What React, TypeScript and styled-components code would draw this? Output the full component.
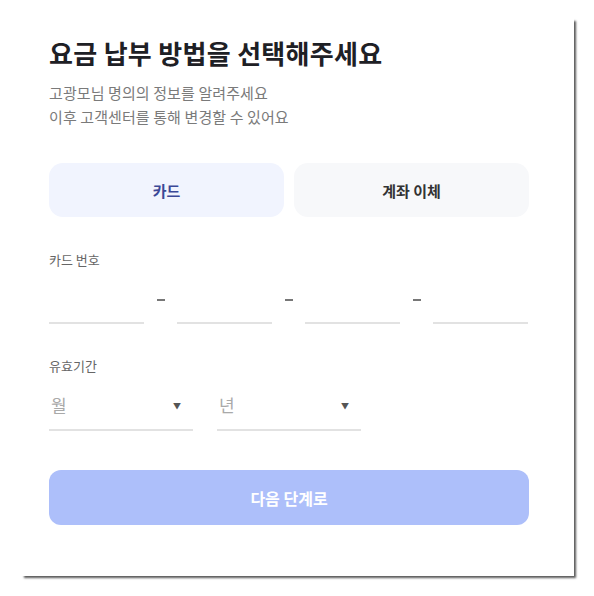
import React, { useState } from "react";
import styled, { createGlobalStyle } from "styled-components";

const GlobalStyle = createGlobalStyle`
  body {
    margin: 0;
    background: #ffffff;
    font-family: "Noto Sans CJK KR", "Noto Sans", sans-serif;
  }
`;

const Page = styled.div`
  height: 596px;
  padding: 17px 0 0 20px;
  box-sizing: border-box;
`;

const Card = styled.div`
  box-sizing: border-box;
  width: 554px;
  height: 559px;
  padding: 20px 0 0 29px;
  background: #ffffff;
  box-shadow: 3px 3px 2px -1px rgba(0, 0, 0, 0.65);
`;

const Content = styled.div`
  width: 480px;
  display: flex;
  flex-direction: column;
`;

const Title = styled.h1`
  margin: 0;
  font-size: 26px;
  line-height: 32px;
  font-weight: 700;
  color: #1e2025;
  letter-spacing: 0.3px;
`;

const Subtitle = styled.p`
  margin: 12px 0 0;
  font-size: 15px;
  line-height: 24px;
  color: #7a7a7a;
  letter-spacing: 0.1px;
`;

const Tabs = styled.div`
  margin-top: 34px;
  display: grid;
  grid-template-columns: 1fr 1fr;
  gap: 10px;
`;

const Tab = styled.button<{ $active?: boolean }>`
  height: 54px;
  border: 0;
  border-radius: 14px;
  font-family: inherit;
  font-size: 15px;
  font-weight: 700;
  background: ${(p) => (p.$active ? "#f1f4fe" : "#f7f8fa")};
  color: ${(p) => (p.$active ? "#3b4897" : "#333333")};
  cursor: pointer;
`;

const FieldLabel = styled.div<{ $top: number }>`
  margin-top: ${(p) => p.$top}px;
  font-size: 13px;
  line-height: 20px;
  color: #666666;
`;

const NumberRow = styled.div`
  margin-top: 13px;
  display: flex;
  align-items: flex-start;
`;

const NumberInput = styled.input`
  box-sizing: border-box;
  width: 95px;
  height: 41px;
  border: 0;
  border-bottom: 2px solid #e2e2e2;
  outline: none;
  font-family: inherit;
  font-size: 15px;
  background: transparent;
`;

const Dash = styled.span`
  width: 33px;
  height: 33px;
  display: flex;
  align-items: center;
  justify-content: center;

  &::before {
    content: "";
    width: 8px;
    height: 2px;
    background: #777777;
  }
`;

const SelectRow = styled.div`
  margin-top: 9px;
  display: flex;
  gap: 24px;
`;

const SelectBox = styled.div`
  box-sizing: border-box;
  width: 144px;
  padding: 8px 12px 12px 2px;
  display: flex;
  align-items: center;
  justify-content: space-between;
  border-bottom: 2px solid #e2e2e2;
`;

const Placeholder = styled.span`
  font-size: 17px;
  line-height: 24px;
  color: #a9a9a9;
`;

const Arrow = styled.span`
  font-size: 8px;
  color: #555555;
`;

const NextButton = styled.button`
  margin-top: 39px;
  height: 55px;
  border: 0;
  border-radius: 12px;
  background: #adbffa;
  color: #ffffff;
  font-family: inherit;
  font-size: 16px;
  font-weight: 700;
`;

export default function App() {
  const [method, setMethod] = useState<"card" | "account">("card");

  return (
    <Page>
      <GlobalStyle />
      <Card>
        <Content>
          <Title>요금 납부 방법을 선택해주세요</Title>
          <Subtitle>
            고광모님 명의의 정보를 알려주세요
            <br />
            이후 고객센터를 통해 변경할 수 있어요
          </Subtitle>
          <Tabs>
            <Tab $active={method === "card"} onClick={() => setMethod("card")}>
              카드
            </Tab>
            <Tab $active={method === "account"} onClick={() => setMethod("account")}>
              계좌 이체
            </Tab>
          </Tabs>

          <FieldLabel $top={33}>카드 번호</FieldLabel>
          <NumberRow>
            <NumberInput />
            <Dash />
            <NumberInput />
            <Dash />
            <NumberInput />
            <Dash />
            <NumberInput />
          </NumberRow>

          <FieldLabel $top={32}>유효기간</FieldLabel>
          <SelectRow>
            <SelectBox>
              <Placeholder>월</Placeholder>
              <Arrow>▼</Arrow>
            </SelectBox>
            <SelectBox>
              <Placeholder>년</Placeholder>
              <Arrow>▼</Arrow>
            </SelectBox>
          </SelectRow>

          <NextButton disabled>다음 단계로</NextButton>
        </Content>
      </Card>
    </Page>
  );
}
